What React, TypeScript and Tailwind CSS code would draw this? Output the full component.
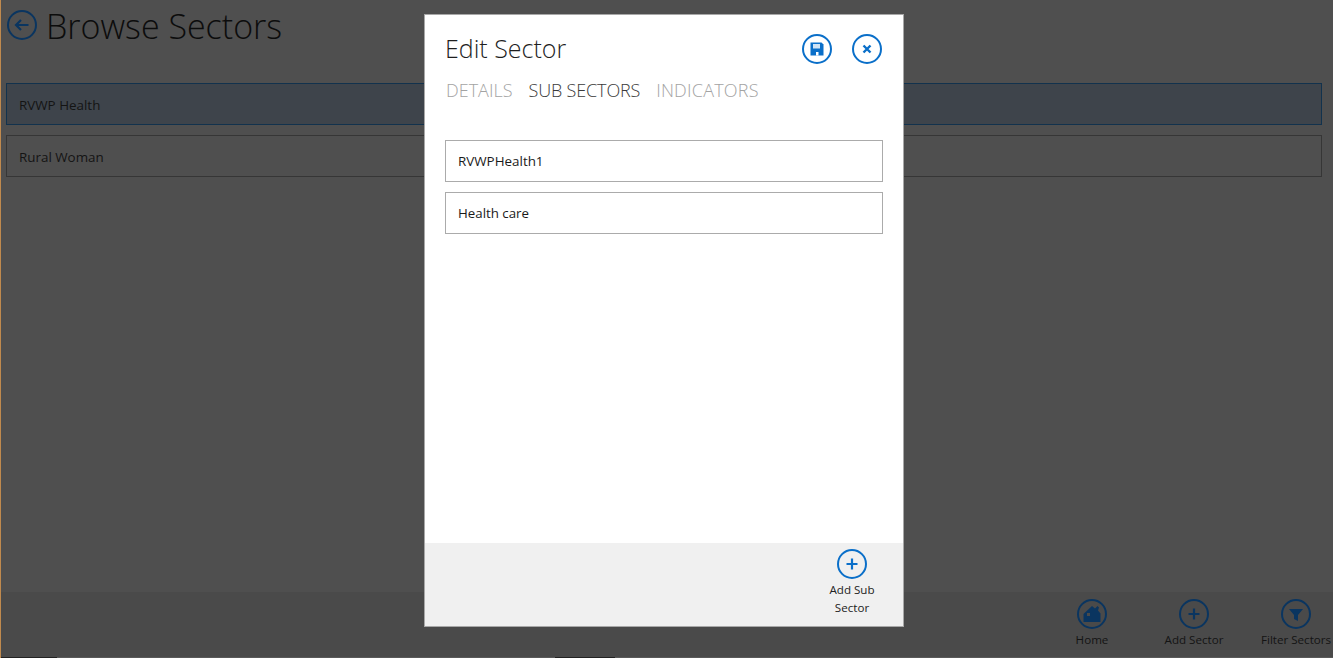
import { ReactNode } from 'react'

const font = "[font-family:'Open_Sans',sans-serif]"

function Circle({ size = 30, color, children }: { size?: number; color: string; children: ReactNode }) {
  return (
    <svg width={size} height={size} viewBox="0 0 30 30" fill="none" className="block">
      <circle cx="15" cy="15" r="14" stroke={color} strokeWidth="2" />
      {children}
    </svg>
  )
}

function PlusIcon({ color }: { color: string }) {
  return (
    <Circle color={color}>
      <path d="M15 9.5v11M9.5 15h11" stroke={color} strokeWidth="2.2" />
    </Circle>
  )
}

function BarItem({ label, icon }: { label: string; icon: ReactNode }) {
  return (
    <div className="flex flex-col items-center w-[102px]">
      {icon}
      <span className="mt-[3px] text-[11.6px] leading-[16px] text-[#141414] whitespace-nowrap">{label}</span>
    </div>
  )
}

export default function App() {
  const dimBlue = '#0a3560'
  const blue = '#0a6fc9'

  return (
    <div className={`relative w-[1333px] h-[658px] overflow-hidden bg-[#4f4f4f] ${font}`}>
      <div className="flex flex-col h-full border-l border-l-[#c08a4e]">
        <div className="flex items-start pl-[6px] h-[83px]">
          <div className="mt-[10px]">
            <svg width="30" height="30" viewBox="0 0 30 30" fill="none" className="block">
              <circle cx="15" cy="15" r="14" stroke={dimBlue} strokeWidth="2" />
              <path d="M21.5 15H9.5M14 10l-5 5 5 5" stroke={dimBlue} strokeWidth="2.2" />
            </svg>
          </div>
          <h1 className="ml-[9px] mt-[3px] text-[34px] leading-[46px] font-light text-[#0c0c0c]">Browse Sectors</h1>
        </div>

        <div className="flex flex-col gap-[10px] pl-[5px] pr-[11px]">
          <div className="h-[42px] flex items-center pl-[12px] pt-[2px] bg-[#3e444b] border border-[#12324d] text-[13.4px] text-[#141414]">RVWP Health</div>
          <div className="h-[42px] flex items-center pl-[12px] pt-[2px] border border-[#363636] text-[13.4px] text-[#141414]">Rural Woman</div>
        </div>

        <div className="mt-auto h-[65px] bg-[#4a4a4a] flex justify-end items-start pt-[7px] overflow-hidden">
          <BarItem
            label="Home"
            icon={
              <Circle color={dimBlue}>
                <path d="M6.5 15 15 7l3 2.5L20.5 7 22 8.5l-1 3 2.5 3V23h-17z" fill={dimBlue} />
                <rect x="10" y="14" width="3" height="3" fill="#4a4a4a" />
              </Circle>
            }
          />
          <BarItem label="Add Sector" icon={<PlusIcon color={dimBlue} />} />
          <div className="-mr-[14px]">
            <BarItem
              label="Filter Sectors"
              icon={
                <Circle color={dimBlue}>
                  <path d="M8 10h14l-5 6v6l-4-2v-4z" fill={dimBlue} />
                </Circle>
              }
            />
          </div>
        </div>
        <div className="h-[1px] bg-[#5a5a5a] flex">
          <div className="w-[56px] bg-[#222222]" />
          <div className="w-[498px]" />
          <div className="w-[60px] bg-[#222222]" />
        </div>
      </div>

      <div className="absolute left-[424px] top-[14px] w-[480px] h-[613px] bg-white border border-[#a8a8a8] flex flex-col">
        <div className="flex items-start justify-between pl-[20px] pr-[21px] pt-[14px]">
          <h2 className="text-[25px] leading-[38px] font-light text-[#1f1f1f]">Edit Sector</h2>
          <div className="flex gap-[20px] pt-[5px]">
            <Circle color={blue}>
              <path d="M8.5 8.5h11L21.5 10.5V21.5H8.5z" fill={blue} />
              <rect x="11" y="10" width="7" height="4.5" fill="#cfe3f5" />
              <rect x="14" y="18" width="2.5" height="3.5" fill="white" />
            </Circle>
            <Circle color={blue}>
              <path d="M11.5 11.5l7 7M18.5 11.5l-7 7" stroke={blue} strokeWidth="2.4" />
            </Circle>
          </div>
        </div>

        <div className="flex pl-[21px] mt-[10px] text-[18px] leading-[26px] font-light">
          <span className="text-[#a3a3a3]">DETAILS</span>
          <span className="ml-[16px] text-[#3a3a3a] tracking-[-0.15px]">SUB SECTORS</span>
          <span className="ml-[16px] text-[#a3a3a3] tracking-[0.2px]">INDICATORS</span>
        </div>

        <div className="flex flex-col gap-[10px] mx-[20px] mt-[37px]">
          <div className="h-[42px] flex items-center pl-[12px] pt-[1px] border border-[#ababab] text-[13.4px] text-[#1a1a1a]">RVWPHealth1</div>
          <div className="h-[42px] flex items-center pl-[12px] pt-[1px] border border-[#ababab] text-[13.3px] text-[#1a1a1a]">Health care</div>
        </div>

        <div className="mt-auto h-[83px] bg-[#f0f0f0] flex justify-end pt-[6px] pr-[21px]">
          <div className="w-[60px] flex flex-col items-center">
            <PlusIcon color={blue} />
            <span className="mt-[2px] text-[11.6px] leading-[18px] text-[#222222] text-center">Add Sub Sector</span>
          </div>
        </div>
      </div>
    </div>
  )
}
